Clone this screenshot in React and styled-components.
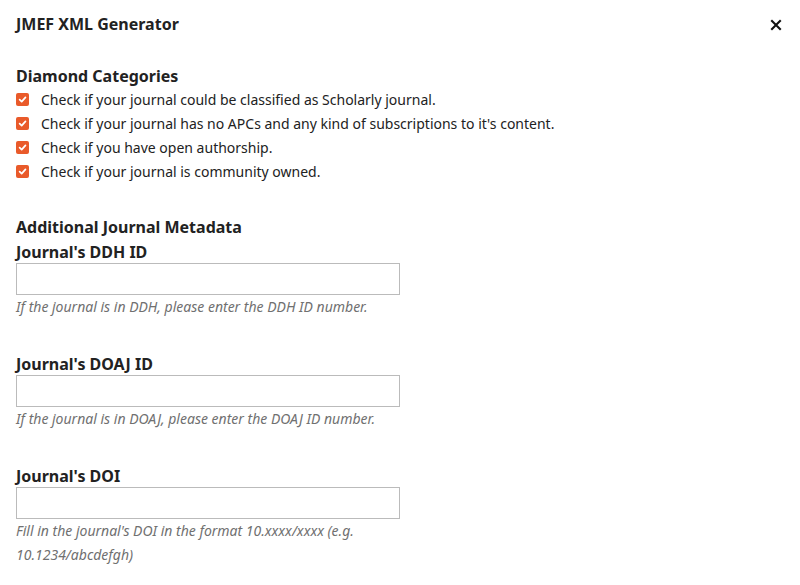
import React from "react";
import styled, { createGlobalStyle } from "styled-components";

const categories = [
  "Check if your journal could be classified as Scholarly journal.",
  "Check if your journal has no APCs and any kind of subscriptions to it's content.",
  "Check if you have open authorship.",
  "Check if your journal is community owned.",
];

const fields = [
  { id: "ddh", label: "Journal's DDH ID", help: "If the journal is in DDH, please enter the DDH ID number." },
  { id: "doaj", label: "Journal's DOAJ ID", help: "If the journal is in DOAJ, please enter the DOAJ ID number." },
  { id: "doi", label: "Journal's DOI", help: "Fill in the journal's DOI in the format 10.xxxx/xxxx (e.g. 10.1234/abcdefgh)" },
];

function CheckMark() {
  return (
    <svg width="9" height="9" viewBox="0 0 10 10">
      <path d="M1.8 5.2 L4.1 7.4 L8.3 2.6" fill="none" stroke="#fff" strokeWidth="1.9" strokeLinecap="round" strokeLinejoin="round" />
    </svg>
  );
}

function App() {
  return (
    <>
      <GlobalStyle />
      <Modal>
        <Header>
          <Title>JMEF XML Generator</Title>
          <CloseButton aria-label="Close">
            <svg width="12" height="12" viewBox="0 0 12 12">
              <path d="M2 2 L10 10 M10 2 L2 10" stroke="#111" strokeWidth="2.1" strokeLinecap="square" />
            </svg>
          </CloseButton>
        </Header>
        <Body>
          <SectionTitle>Diamond Categories</SectionTitle>
          <CheckList>
            {categories.map(text => (
              <CheckRow key={text}>
                <Box><CheckMark /></Box>
                <span>{text}</span>
              </CheckRow>
            ))}
          </CheckList>

          <SectionTitle spaced>Additional Journal Metadata</SectionTitle>
          {fields.map((f, i) => (
            <Field key={f.id} first={i === 0}>
              <Label htmlFor={f.id}>{f.label}</Label>
              <Input id={f.id} type="text" />
              <Help>{f.help}</Help>
            </Field>
          ))}
        </Body>
      </Modal>
    </>
  );
}

const GlobalStyle = createGlobalStyle`
body {
  margin: 0;
  background: #fff;
  font-family: "Noto Sans", "Open Sans", sans-serif;
  color: #222;
}
`;

const Modal = styled.div`
width: 800px;
height: 585px;
overflow: hidden;
background: #fff;
`;

const Header = styled.div`
display: flex;
align-items: center;
justify-content: space-between;
height: 48px;
padding: 0 16px 0 16px;
`;

const Title = styled.h1`
margin: 0;
font-size: 16px;
font-weight: 700;
line-height: 22px;
color: #222;
`;

const CloseButton = styled.button`
display: flex;
align-items: center;
justify-content: center;
width: 16px;
height: 16px;
margin-top: 2px;
padding: 0;
border: none;
background: none;
cursor: pointer;
`;

const Body = styled.div`
padding: 0 16px;
`;

const SectionTitle = styled.h2`
margin: ${props => props.spaced ? "34px" : "18px"} 0 0;
font-size: 16px;
font-weight: 700;
line-height: 21px;
color: #222;
`;

const CheckList = styled.div`
display: flex;
flex-direction: column;
`;

const CheckRow = styled.label`
display: flex;
align-items: center;
gap: 12px;
height: 24px;
font-size: 14px;
color: #222;
`;

const Box = styled.span`
display: flex;
align-items: center;
justify-content: center;
width: 13px;
height: 13px;
border-radius: 2px;
background: #e95a2a;
flex: none;
`;

const Field = styled.div`
display: flex;
flex-direction: column;
margin-top: ${props => props.first ? "3px" : "34px"};
`;

const Label = styled.label`
font-size: 16px;
font-weight: 700;
line-height: 22px;
color: #222;
`;

const Input = styled.input`
box-sizing: border-box;
width: 384px;
height: 32px;
border: 1px solid #bbb;
border-radius: 0;
padding: 0 8px;
font: inherit;
`;

const Help = styled.div`
font-size: 14px;
font-style: italic;
line-height: 24px;
color: #707070;
max-width: 384px;
`;

export default App;
